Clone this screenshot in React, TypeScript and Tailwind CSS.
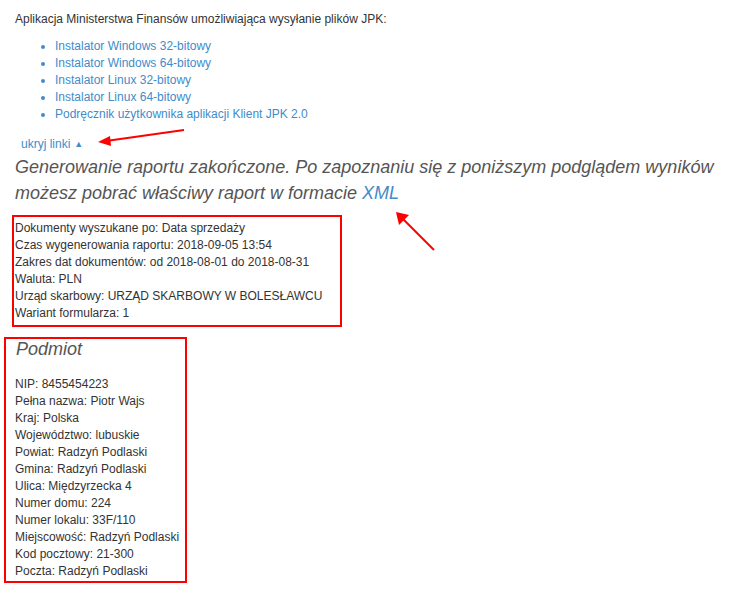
import React from "react";

const links = [
  "Instalator Windows 32-bitowy",
  "Instalator Windows 64-bitowy",
  "Instalator Linux 32-bitowy",
  "Instalator Linux 64-bitowy",
  "Podręcznik użytkownika aplikacji Klient JPK 2.0",
];

const raportInfo = [
  "Dokumenty wyszukane po: Data sprzedaży",
  "Czas wygenerowania raportu: 2018-09-05 13:54",
  "Zakres dat dokumentów: od 2018-08-01 do 2018-08-31",
  "Waluta: PLN",
  "Urząd skarbowy: URZĄD SKARBOWY W BOLESŁAWCU",
  "Wariant formularza: 1",
];

const podmiot = [
  "NIP: 8455454223",
  "Pełna nazwa: Piotr Wajs",
  "Kraj: Polska",
  "Województwo: lubuskie",
  "Powiat: Radzyń Podlaski",
  "Gmina: Radzyń Podlaski",
  "Ulica: Międzyrzecka 4",
  "Numer domu: 224",
  "Numer lokalu: 33F/110",
  "Miejscowość: Radzyń Podlaski",
  "Kod pocztowy: 21-300",
  "Poczta: Radzyń Podlaski",
];

export default function App() {
  return (
    <div className="relative w-[731px] h-[589px] bg-white overflow-hidden px-[15px] text-[12px] leading-[17px] text-[#333] font-['Liberation_Sans',Arial,sans-serif]">
      <p className="pt-[11px]">Aplikacja Ministerstwa Finansów umożliwiająca wysyłanie plików JPK:</p>

      <ul className="list-disc pl-[40px] mt-[10px] text-[#428bca]">
        {links.map((l) => (
          <li key={l}>{l}</li>
        ))}
      </ul>

      <div className="mt-[13px] ml-[6px] text-[#428bca] flex items-center gap-[4px]">
        <span>ukryj linki</span>
        <span className="text-[9px] leading-none">▲</span>
      </div>

      <h4 className="italic text-[18px] leading-[26px] text-[#555] mt-[1px]">
        Generowanie raportu zakończone. Po zapoznaniu się z poniższym podglądem wyników
        <br />
        możesz pobrać właściwy raport w formacie <span className="text-[#428bca]">XML</span>
      </h4>

      <div className="mt-[9px] -ml-[3px] w-[330px] border-2 border-[#ff0000] pl-[1px] pt-[3px] pb-[3px]">
        {raportInfo.map((r) => (
          <div key={r}>{r}</div>
        ))}
      </div>

      <div className="mt-[10px] -ml-[11px] w-[183px] border-2 border-[#ff0000] pl-[9px] pb-[1px]">
        <h4 className="italic text-[18px] leading-[20px] text-[#555] pl-[1px]">Podmiot</h4>
        <div className="mt-[17px]">
          {podmiot.map((r) => (
            <div key={r}>{r}</div>
          ))}
        </div>
      </div>

      <svg className="absolute left-0 top-0 pointer-events-none" width="731" height="589">
        <line x1="184" y1="130" x2="106" y2="141" stroke="#ff0000" strokeWidth="2" />
        <polygon points="98,142 110,136 111,146" fill="#ff0000" />
        <line x1="434" y1="250" x2="402" y2="218" stroke="#ff0000" strokeWidth="2" />
        <polygon points="396,212 399,225 409,215" fill="#ff0000" />
      </svg>
    </div>
  );
}
